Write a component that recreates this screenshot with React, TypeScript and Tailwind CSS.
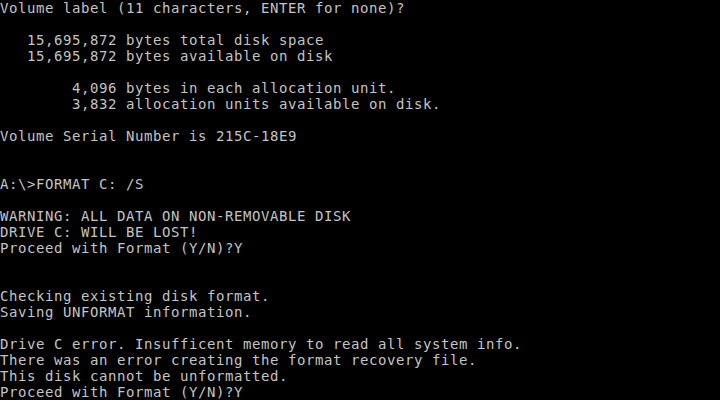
const lines: string[] = [
  "Volume label (11 characters, ENTER for none)?",
  "",
  "   15,695,872 bytes total disk space",
  "   15,695,872 bytes available on disk",
  "",
  "        4,096 bytes in each allocation unit.",
  "        3,832 allocation units available on disk.",
  "",
  "Volume Serial Number is 215C-18E9",
  "",
  "",
  "A:\\>FORMAT C: /S",
  "",
  "WARNING: ALL DATA ON NON-REMOVABLE DISK",
  "DRIVE C: WILL BE LOST!",
  "Proceed with Format (Y/N)?Y",
  "",
  "",
  "Checking existing disk format.",
  "Saving UNFORMAT information.",
  "",
  "Drive C error. Insufficent memory to read all system info.",
  "There was an error creating the format recovery file.",
  "This disk cannot be unformatted.",
  "Proceed with Format (Y/N)?Y",
];

export default function App() {
  return (
    <div className="w-[720px] h-[400px] bg-black overflow-hidden">
      <div className="flex flex-col font-['DejaVu_Sans_Mono',monospace] text-[14px] tracking-[0.57px] leading-4 text-[#c4c4c4] whitespace-pre">
        {lines.map((line, i) => (
          <div key={i} className="h-4">
            {line}
          </div>
        ))}
      </div>
    </div>
  );
}
